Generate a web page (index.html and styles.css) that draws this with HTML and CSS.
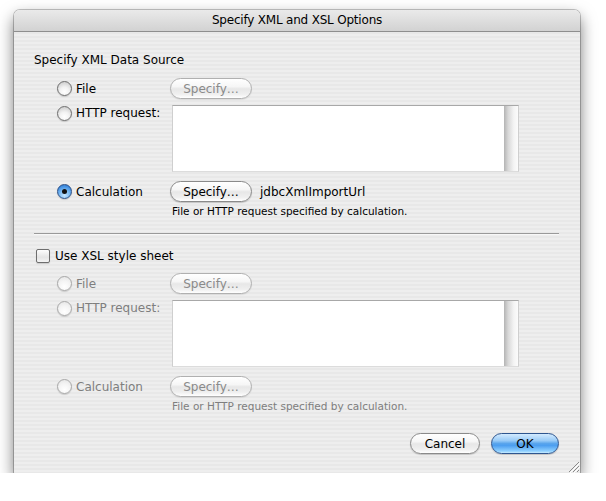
FILE: index.html
```html
<!DOCTYPE html>
<html>
<head>
<meta charset="utf-8">
<link rel="stylesheet" href="styles.css">
</head>
<body>
<div class="window">
  <div class="titlebar">Specify XML and XSL Options</div>
  <div class="content">
    <div class="section-title">Specify XML Data Source</div>
    <div class="group">
      <div class="row">
        <label class="opt"><span class="radio"></span>File</label>
        <button class="btn btn-specify is-disabled">Specify…</button>
      </div>
      <div class="row row-http">
        <label class="opt opt-top"><span class="radio"></span>HTTP request:</label>
        <div class="textbox"><div class="track"></div></div>
      </div>
      <div class="row row-calc">
        <label class="opt"><span class="radio is-on"><span class="dot"></span></span>Calculation</label>
        <button class="btn btn-specify">Specify…</button>
        <span class="value">jdbcXmlImportUrl</span>
      </div>
      <div class="caption">File or HTTP request specified by calculation.</div>
    </div>
    <div class="sep"></div>
    <label class="check-row"><span class="checkbox"></span>Use XSL style sheet</label>
    <div class="group group-second is-dim">
      <div class="row">
        <label class="opt"><span class="radio"></span>File</label>
        <button class="btn btn-specify is-disabled">Specify…</button>
      </div>
      <div class="row row-http">
        <label class="opt opt-top"><span class="radio"></span>HTTP request:</label>
        <div class="textbox"><div class="track"></div></div>
      </div>
      <div class="row row-calc">
        <label class="opt"><span class="radio"></span>Calculation</label>
        <button class="btn btn-specify is-disabled">Specify…</button>
      </div>
      <div class="caption">File or HTTP request specified by calculation.</div>
    </div>
    <div class="actions">
      <button class="btn btn-cancel">Cancel</button>
      <button class="btn btn-ok">OK</button>
    </div>
  </div>
  <svg class="grip" width="15" height="15" viewBox="0 0 15 15">
    <line x1="14" y1="4" x2="4" y2="14" stroke="#8a8a8a" stroke-width="1"/>
    <line x1="15" y1="5" x2="5" y2="15" stroke="#ffffff" stroke-width="1"/>
    <line x1="14" y1="8" x2="8" y2="14" stroke="#8a8a8a" stroke-width="1"/>
    <line x1="15" y1="9" x2="9" y2="15" stroke="#ffffff" stroke-width="1"/>
    <line x1="14" y1="12" x2="12" y2="14" stroke="#8a8a8a" stroke-width="1"/>
  </svg>
</div>
</body>
</html>
```
FILE: styles.css
```css
html, body {
  margin: 0;
  padding: 0;
  background: #ffffff;
}
body {
  font-family: "DejaVu Sans", "Liberation Sans", sans-serif;
  font-size: 12px;
  color: #000;
}
.window {
  position: relative;
  width: 566px;
  height: 463px;
  margin: 10px 0 0 14px;
  border-radius: 6px 6px 0 0;
  overflow: hidden;
  display: flex;
  flex-direction: column;
  background: repeating-linear-gradient(to bottom, #eeeeee 0, #eeeeee 2px, #e8e8e8 2px, #e8e8e8 4px);
  box-shadow: 0 0 0 1px rgba(0,0,0,0.22), 0 7px 16px rgba(0,0,0,0.55);
}
.titlebar {
  height: 21px;
  line-height: 21px;
  border-bottom: 1px solid #8e8e8e;
  background: linear-gradient(to bottom, #eaeaea, #d2d2d2);
  text-align: center;
  font-size: 12px;
  letter-spacing: -0.2px;
}
.content {
  flex: 1;
  display: flex;
  flex-direction: column;
  padding: 20px 21px 0 20px;
}
.section-title {
  line-height: 16px;
}
.group {
  margin-left: 23px;
  margin-top: 10px;
  display: flex;
  flex-direction: column;
}
.group-second {
  margin-top: 9px;
}
.row {
  display: flex;
  align-items: center;
  height: 21px;
}
.row-http {
  align-items: flex-start;
  height: auto;
  margin-top: 6px;
}
.row-calc {
  margin-top: 9px;
}
.opt {
  width: 113px;
  display: flex;
  align-items: center;
  gap: 4px;
  line-height: 16px;
  flex-shrink: 0;
}
.opt-top {
  margin-top: 0;
}
.radio {
  width: 13px;
  height: 13px;
  border-radius: 50%;
  border: 1px solid #6e6e6e;
  background: radial-gradient(circle at 50% 75%, #ffffff 0, #f2f2f2 40%, #d6d6d6 75%, #c4c4c4 100%);
  box-shadow: 0 1px 1px rgba(0,0,0,0.15);
  display: flex;
  align-items: center;
  justify-content: center;
  flex-shrink: 0;
}
.radio.is-on {
  border-color: #2b4f86;
  background: radial-gradient(circle at 50% 80%, #c6e6ff 0, #7fbdf4 40%, #3f8de0 75%, #2c6cbf 100%);
}
.radio .dot {
  width: 5px;
  height: 5px;
  border-radius: 50%;
  background: #111;
}
.btn {
  font-family: "DejaVu Sans", "Liberation Sans", sans-serif;
  font-size: 12px;
  height: 21px;
  padding: 0;
  border: 1px solid #8a8a8a;
  border-radius: 11px;
  background: linear-gradient(to bottom, #ffffff 0%, #f6f6f6 40%, #e7e7e7 52%, #efefef 80%, #ffffff 100%);
  box-shadow: 0 1px 1px rgba(0,0,0,0.18);
  color: #000;
  text-align: center;
}
.btn-specify {
  width: 82px;
}
.btn.is-disabled {
  color: #8a8a8a;
  border-color: #b0b0b0;
  box-shadow: 0 1px 1px rgba(0,0,0,0.08);
}
.value {
  margin-left: 8px;
}
.textbox {
  margin-left: 2px;
  width: 347px;
  height: 67px;
  box-sizing: border-box;
  background: #ffffff;
  border-top: 1px solid #a8a8a8;
  border-left: 1px solid #cfcfcf;
  border-right: 1px solid #cfcfcf;
  border-bottom: 1px solid #dcdcdc;
  display: flex;
  justify-content: flex-end;
}
.track {
  width: 14px;
  height: 100%;
  background: linear-gradient(to right, #b4b4b4 0%, #d8d8d8 30%, #f4f4f4 70%, #fbfbfb 100%);
}
.caption {
  margin-left: 115px;
  margin-top: 2px;
  font-size: 10.5px;
  line-height: 14px;
}
.sep {
  margin-top: 15px;
  height: 1px;
  background: #9a9a9a;
  box-shadow: 0 1px 0 #f8f8f8;
}
.check-row {
  margin-top: 14px;
  margin-left: 2px;
  display: flex;
  align-items: center;
  gap: 5px;
  line-height: 16px;
}
.checkbox {
  width: 12px;
  height: 12px;
  border: 1px solid #6e6e6e;
  border-radius: 2px;
  background: linear-gradient(to bottom, #fdfdfd, #e4e4e4 60%, #f4f4f4);
  box-shadow: 0 1px 1px rgba(0,0,0,0.15);
}
.is-dim {
  color: #7e7e7e;
}
.is-dim .radio {
  border-color: #a8a8a8;
  background: radial-gradient(circle at 50% 75%, #ffffff 0, #f4f4f4 50%, #e2e2e2 100%);
}
.actions {
  margin-top: 20px;
  display: flex;
  justify-content: flex-end;
  gap: 11px;
}
.btn-cancel {
  width: 70px;
}
.btn-ok {
  width: 68px;
  border-color: #2e5690;
  background: linear-gradient(to bottom, #d3ebff 0%, #99cbf7 35%, #5aa5ec 50%, #4c9ef0 60%, #8fd0ff 90%, #c8ecff 100%);
}
.grip {
  position: absolute;
  right: 0;
  bottom: 0;
}
```
